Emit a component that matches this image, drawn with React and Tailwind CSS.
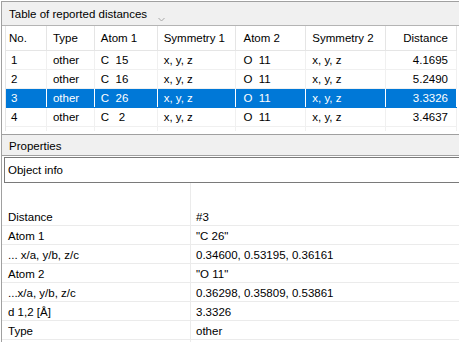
const columns = [
  { label: "No.", width: "w-[41px]", pad: "pl-[3px]" },
  { label: "Type", width: "w-[48px]", pad: "pl-[6px]" },
  { label: "Atom 1", width: "w-[63px]", pad: "pl-[6px]" },
  { label: "Symmetry 1", width: "w-[79px]", pad: "pl-[6px]" },
  { label: "Atom 2", width: "w-[70px]", pad: "pl-[7px]" },
  { label: "Symmetry 2", width: "w-[80px]", pad: "pl-[6px]" },
  { label: "Distance", width: "w-[71px]", pad: "pr-[8px] justify-end" },
];

const rows = [
  ["1", "other", "C  15", "x, y, z", "O  11", "x, y, z", "4.1695"],
  ["2", "other", "C  16", "x, y, z", "O  11", "x, y, z", "5.2490"],
  ["3", "other", "C  26", "x, y, z", "O  11", "x, y, z", "3.3326"],
  ["4", "other", "C   2", "x, y, z", "O  11", "x, y, z", "3.4637"],
];

const props = [
  ["Distance", "#3"],
  ["Atom 1", '"C  26"'],
  ["... x/a, y/b, z/c", "0.34600, 0.53195, 0.36161"],
  ["Atom 2", '"O  11"'],
  ["...x/a, y/b, z/c", "0.36298, 0.35809, 0.53861"],
  ["d 1,2 [Å]", "3.3326"],
  ["Type", "other"],
  ["", ""],
];

export default function App() {
  const selected = 2;

  return (
    <div className="w-[459px] h-[342px] bg-white overflow-hidden pt-px pl-px text-[11.5px] leading-none text-black font-['Liberation_Sans',Arial,sans-serif]">
      <div className="h-[341px] border-l border-t border-[#a0a0a0] flex flex-col">
        {/* table panel title */}
        <div className="h-[24px] shrink-0 bg-[#f0f0f0] border-b border-[#b4b4b4] flex items-center pl-[7px] pt-[2px]">
          <span>Table of reported distances</span>
          <svg width="7" height="5" viewBox="0 0 7 5" className="ml-[11px] mt-[10px]">
            <path d="M0.5 1 L3.5 4 L6.5 1" fill="none" stroke="#a6a6a6" strokeWidth="1" />
          </svg>
        </div>

        {/* table */}
        <div className="h-[108px] shrink-0 pl-[3px] overflow-hidden">
          <div className="w-[452px] h-[105px] border-l border-[#e5e5e5] overflow-hidden">
            <div className="flex h-[25px] border-b border-[#e5e5e5]">
              {columns.map((c) => (
                <div key={c.label} className={`${c.width} ${c.pad} pt-[2px] flex items-center border-r border-[#e5e5e5]`}>
                  {c.label}
                </div>
              ))}
            </div>
            {rows.map((r, i) => {
              const sel = i === selected;
              return (
                <div key={i} className={`flex h-[19px] border-b ${sel ? "bg-[#0078d7] text-white border-[#0078d7]" : "border-[#f0f0f0]"}`}>
                  {r.map((v, j) => (
                    <div
                      key={j}
                      className={`${columns[j].width} ${columns[j].pad} pt-[2px] flex items-center whitespace-pre border-r ${sel ? "border-white" : "border-[#f0f0f0]"} ${j === 0 ? "pl-[5px]" : ""}`}
                    >
                      {v}
                    </div>
                  ))}
                </div>
              );
            })}
            <div className="flex h-[10px]">
              {columns.map((c) => (
                <div key={c.label} className={`${c.width} border-r border-[#f0f0f0]`} />
              ))}
            </div>
          </div>
        </div>

        {/* properties panel */}
        <div className="h-[22px] shrink-0 bg-[#f0f0f0] border-t border-b border-[#a0a0a0] flex items-center pl-[7px] pt-[3px]">
          Properties
        </div>
        <div className="h-[26px] shrink-0 ml-[2px] mt-px border border-r-0 border-[#7a7a7a] flex items-center pl-[3px] pt-[2px]">
          Object info
        </div>

        <div className="flex-1 flex flex-col overflow-hidden">
          <div className="flex h-[24px] shrink-0">
            <div className="w-[189px] border-r border-[#ebebeb]" />
          </div>
          {props.map(([k, v], i) => (
            <div key={i} className="flex h-[19px] shrink-0 border-b border-[#ebebeb]">
              <div className="w-[189px] pl-[6px] pt-[3px] flex items-center border-r border-[#ebebeb]">{k}</div>
              <div className="flex-1 pl-[5px] pt-[3px] flex items-center">{v}</div>
            </div>
          ))}
        </div>
      </div>
    </div>
  );
}
